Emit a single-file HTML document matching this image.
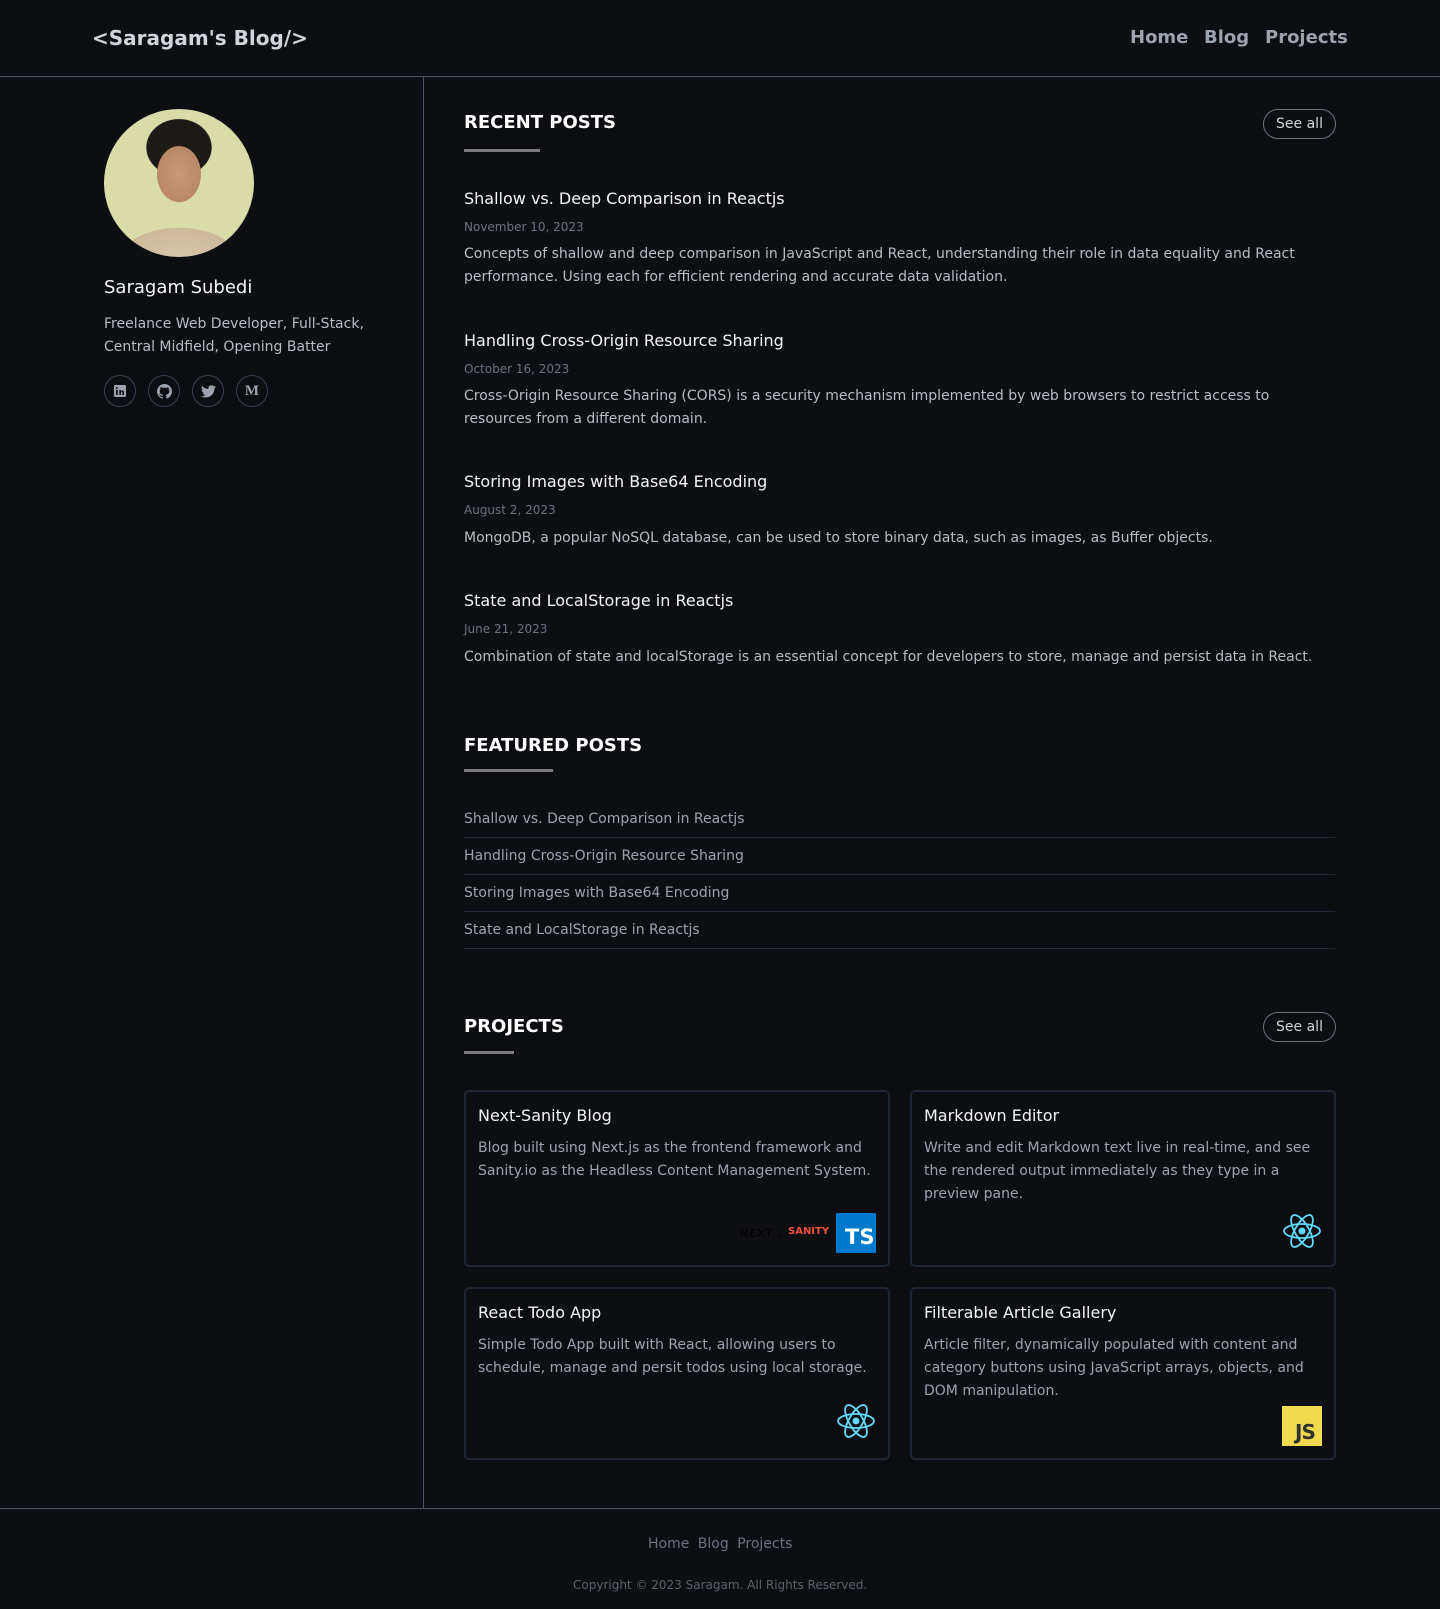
<!DOCTYPE html>
<html><head><meta charset="utf-8"><style>
*{box-sizing:border-box;margin:0;padding:0}
body{width:1440px;height:1609px;background:#0d0e11;font-family:"DejaVu Sans","Liberation Sans",sans-serif;color:#e5e7eb;position:relative;overflow:hidden}
.a{position:absolute;white-space:nowrap}
.hdr{position:absolute;left:0;top:0;width:1440px;height:77px;border-bottom:1px solid #4b5563}
.side{position:absolute;left:423px;top:77px;width:1px;height:1431px;background:#4b5563}
.logo{left:92px;top:26px;font-size:20px;font-weight:bold;color:#d1d5db}
.nav{top:27px;font-size:18px;font-weight:bold;color:#9ca3af}
.h2{font-size:18px;font-weight:bold;color:#fff}
.ul{position:absolute;height:3px;background:#7b7b7b}
.btn{position:absolute;width:73px;height:30px;border:1px solid #6b7280;border-radius:15px;font-size:14px;color:#d1d5db;text-align:center;line-height:28px}
.pt{font-size:16px;color:#f3f4f6}
.pd{font-size:12px;color:#6b7280}
.pe{font-size:14px;color:#b8bcc4;line-height:23px;white-space:normal;width:871px}
.fi{position:absolute;left:464px;width:871px;height:37px;border-bottom:1px solid #1f2937;font-size:14px;color:#9ca3af;line-height:37px}
.card{position:absolute;width:426px;border:2px solid #1e2633;border-radius:5px}
.ct{position:absolute;left:12px;top:14px;font-size:16px;color:#f3f4f6;white-space:nowrap}
.cd{position:absolute;left:12px;top:45px;right:10px;font-size:14px;color:#9ca3af;line-height:23px}
.soc{position:absolute;top:375px;width:32px;height:32px;border:1px solid #374151;border-radius:50%;display:flex;align-items:center;justify-content:center}
</style></head><body>
<div class="hdr"></div>
<div class="a logo">&lt;Saragam's Blog/&gt;</div>
<div class="a nav" style="left:1130px">Home</div>
<div class="a nav" style="left:1204px">Blog</div>
<div class="a nav" style="left:1265px">Projects</div>
<div class="side"></div>

<div class="a" style="left:104px;top:109px;width:150px;height:148px;border-radius:50%;background:radial-gradient(ellipse 36px 46px at 50% 44%,#c89a78 0,#b98866 60%,transparent 62%),radial-gradient(ellipse 46px 40px at 50% 26%,#1c1a17 0,#1c1a17 70%,transparent 72%),radial-gradient(ellipse 70px 36px at 50% 100%,#d8c6ac 0,#cdb89a 80%,transparent 82%),#d9dca8"></div>
<div class="a" style="left:104px;top:277px;font-size:18px;color:#f3f4f6">Saragam Subedi</div>
<div class="a" style="left:104px;top:313px;font-size:14px;color:#b8bcc4;line-height:23px">Freelance Web Developer, Full-Stack,<br>Central Midfield, Opening Batter</div>
<div class="soc" style="left:104px"><svg width="14" height="14" viewBox="0 0 14 14"><rect x="1" y="1" width="12" height="12" rx="1.5" fill="#9ca3af"/><rect x="3" y="6" width="1.8" height="5" fill="#0d0e11"/><circle cx="3.9" cy="4" r="1" fill="#0d0e11"/><path d="M6.3 6h1.7v5H6.3zM8 7.5c.5-1.3 3-1.5 3 .8V11H9.3V8.5c0-1-1.3-1-1.3 0z" fill="#0d0e11"/></svg></div>
<div class="soc" style="left:148px"><svg width="15" height="15" viewBox="0 0 16 16"><path fill="#9ca3af" d="M8 0C3.6 0 0 3.6 0 8c0 3.5 2.3 6.5 5.5 7.6.4.1.5-.2.5-.4v-1.4c-2.200.5-2.700-1-2.700-1-.4-.9-.9-1.2-.9-1.2-.7-.5.1-.5.1-.5.8.1 1.2.8 1.2.8.7 1.2 1.9.9 2.3.7.1-.5.3-.9.5-1.1-1.8-.2-3.600-.9-3.600-4 0-.9.3-1.6.8-2.1-.1-.2-.4-1 .1-2.100 0 0 .7-.2 2.200.8.6-.2 1.300-.3 2-.3s1.4.1 2 .3c1.5-1 2.200-.8 2.200-.8.4 1.1.2 1.900.1 2.100.5.6.8 1.300.8 2.100 0 3.100-1.900 3.700-3.600 3.900.3.3.5.8.5 1.500v2.200c0 .2.1.5.6.4C13.700 14.500 16 11.500 16 8c0-4.400-3.600-8-8-8z"/></svg></div>
<div class="soc" style="left:192px"><svg width="15" height="13" viewBox="0 0 24 20"><path fill="#9ca3af" d="M24 2.4c-.9.4-1.8.7-2.8.8 1-.6 1.8-1.6 2.2-2.7-1 .6-2 1-3.1 1.2C19.3.7 18 0 16.6 0c-2.7 0-4.9 2.2-4.9 4.9 0 .4 0 .8.1 1.1C7.7 5.8 4.1 3.9 1.7.9c-.4.7-.7 1.6-.7 2.5 0 1.7.9 3.2 2.2 4.1-.8 0-1.6-.2-2.2-.6v.1c0 2.4 1.7 4.4 3.9 4.8-.4.1-.8.2-1.3.2-.3 0-.6 0-.9-.1.6 2 2.4 3.4 4.6 3.4-1.7 1.3-3.8 2.1-6.1 2.1-.4 0-.8 0-1.2-.1 2.2 1.4 4.8 2.2 7.5 2.2 9.1 0 14-7.5 14-14v-.6c1-.7 1.8-1.6 2.5-2.5z"/></svg></div>
<div class="soc" style="left:236px;font-family:'Liberation Serif',serif;font-weight:bold;font-size:15px;color:#9ca3af">M</div>

<div class="a h2" style="left:464px;top:112px">RECENT POSTS</div>
<div class="ul" style="left:464px;top:149px;width:76px"></div>
<div class="btn" style="left:1263px;top:109px">See all</div>

<div class="a pt" style="left:464px;top:189px">Shallow vs. Deep Comparison in Reactjs</div>
<div class="a pd" style="left:464px;top:220px">November 10, 2023</div>
<div class="a pe" style="left:464px;top:243px">Concepts of shallow and deep comparison in JavaScript and React, understanding their role in data equality and React performance. Using each for efficient rendering and accurate data validation.</div>

<div class="a pt" style="left:464px;top:331px">Handling Cross-Origin Resource Sharing</div>
<div class="a pd" style="left:464px;top:362px">October 16, 2023</div>
<div class="a pe" style="left:464px;top:385px">Cross-Origin Resource Sharing (CORS) is a security mechanism implemented by web browsers to restrict access to resources from a different domain.</div>

<div class="a pt" style="left:464px;top:472px">Storing Images with Base64 Encoding</div>
<div class="a pd" style="left:464px;top:503px">August 2, 2023</div>
<div class="a pe" style="left:464px;top:527px;width:900px">MongoDB, a popular NoSQL database, can be used to store binary data, such as images, as Buffer objects.</div>

<div class="a pt" style="left:464px;top:591px">State and LocalStorage in Reactjs</div>
<div class="a pd" style="left:464px;top:622px">June 21, 2023</div>
<div class="a pe" style="left:464px;top:646px;width:900px">Combination of state and localStorage is an essential concept for developers to store, manage and persist data in React.</div>

<div class="a h2" style="left:464px;top:735px">FEATURED POSTS</div>
<div class="ul" style="left:464px;top:769px;width:89px"></div>
<div class="fi" style="top:801px">Shallow vs. Deep Comparison in Reactjs</div>
<div class="fi" style="top:838px">Handling Cross-Origin Resource Sharing</div>
<div class="fi" style="top:875px">Storing Images with Base64 Encoding</div>
<div class="fi" style="top:912px">State and LocalStorage in Reactjs</div>

<div class="a h2" style="left:464px;top:1016px">PROJECTS</div>
<div class="ul" style="left:464px;top:1051px;width:50px"></div>
<div class="btn" style="left:1263px;top:1012px">See all</div>

<div class="card" style="left:464px;top:1090px;height:177px">
<div class="ct">Next-Sanity Blog</div>
<div class="cd">Blog built using Next.js as the frontend framework and Sanity.io as the Headless Content Management System.</div>
<div class="a" style="left:274px;top:135px;font-size:11px;color:#000;letter-spacing:1px">NEXT.<span style="font-size:5px">JS</span></div>
<div class="a" style="left:322px;top:134px;font-size:10px;font-weight:bold;color:#f04f3a">SANITY</div>
<div class="a" style="left:370px;top:121px;width:40px;height:40px;background:#007acc;color:#fff;font-weight:bold;font-size:21px;padding:14px 0 0 9px;line-height:20px">TS</div>
</div>
<div class="card" style="left:910px;top:1090px;height:177px">
<div class="ct">Markdown Editor</div>
<div class="cd">Write and edit Markdown text live in real-time, and see the rendered output immediately as they type in a preview pane.</div>
<svg class="a" style="left:370px;top:121px" width="40" height="36" viewBox="-20 -18 40 36"><g fill="none" stroke="#61dafb" stroke-width="1.8"><ellipse rx="18" ry="7"/><ellipse rx="18" ry="7" transform="rotate(60)"/><ellipse rx="18" ry="7" transform="rotate(120)"/></g><circle r="3.5" fill="#61dafb"/></svg>
</div>
<div class="card" style="left:464px;top:1287px;height:173px">
<div class="ct">React Todo App</div>
<div class="cd">Simple Todo App built with React, allowing users to schedule, manage and persit todos using local storage.</div>
<svg class="a" style="left:370px;top:114px" width="40" height="36" viewBox="-20 -18 40 36"><g fill="none" stroke="#61dafb" stroke-width="1.8"><ellipse rx="18" ry="7"/><ellipse rx="18" ry="7" transform="rotate(60)"/><ellipse rx="18" ry="7" transform="rotate(120)"/></g><circle r="3.5" fill="#61dafb"/></svg>
</div>
<div class="card" style="left:910px;top:1287px;height:173px">
<div class="ct">Filterable Article Gallery</div>
<div class="cd">Article filter, dynamically populated with content and category buttons using JavaScript arrays, objects, and DOM manipulation.</div>
<div class="a" style="left:370px;top:117px;width:40px;height:40px;background:#f0db4f;color:#323330;font-weight:bold;font-size:20px;padding:16px 0 0 13px;line-height:20px;letter-spacing:-1px">JS</div>
</div>

<div class="a" style="left:0;top:1508px;width:1440px;height:1px;background:#4b5563"></div>
<div class="a" style="left:648px;top:1536px;font-size:14px;color:#6b7280;word-spacing:4px">Home Blog Projects</div>
<div class="a" style="left:573px;top:1578px;font-size:12px;color:#5b616b">Copyright © 2023 Saragam. All Rights Reserved.</div>
</body></html>
